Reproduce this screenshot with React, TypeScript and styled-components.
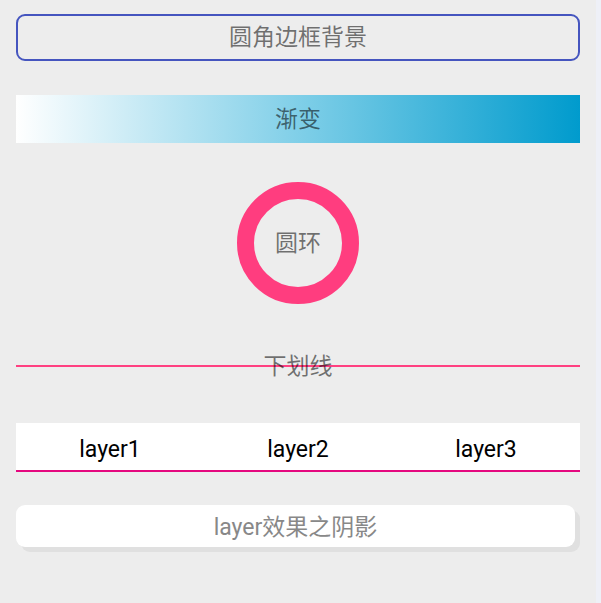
import React from "react";
import styled, { createGlobalStyle } from "styled-components";

const Global = createGlobalStyle`
  html, body { margin: 0; padding: 0; }
  body {
    background: #eef0f6;
    font-family: Roboto, "Noto Sans CJK SC", sans-serif;
  }
`;

const Screen = styled.div`
  display: flex;
  width: 601px;
  height: 603px;
  overflow: hidden;
`;

const Panel = styled.div`
  width: 596px;
  background: #ededed;
  box-sizing: border-box;
  padding: 14px 16px 0 16px;
  display: flex;
  flex-direction: column;
`;

const Strip = styled.div`
  flex: 1;
  background: #eef0f7;
`;

const Label = styled.span<{ $color?: string }>`
  font-size: 23px;
  line-height: 1;
  color: ${(p) => p.$color ?? "rgba(0,0,0,0.54)"};
  white-space: nowrap;
`;

const BorderBox = styled.div`
  height: 47px;
  box-sizing: border-box;
  border: 2px solid #4555bf;
  border-radius: 9px;
  display: flex;
  align-items: center;
  justify-content: center;
`;

const GradientBox = styled.div`
  margin-top: 34px;
  height: 48px;
  background: linear-gradient(to right, #ffffff 0%, #80cfe8 50%, #009bcd 100%);
  display: flex;
  align-items: center;
  justify-content: center;
`;

const Ring = styled.div`
  margin: 39px auto 0;
  width: 122px;
  height: 122px;
  box-sizing: border-box;
  border: 17px solid #ff3d7f;
  border-radius: 50%;
  display: flex;
  align-items: center;
  justify-content: center;
`;

const UnderlineRow = styled.div`
  margin-top: 42px;
  height: 40px;
  background: linear-gradient(
    to bottom,
    transparent 19px,
    #ff4081 19px,
    #ff4081 21px,
    transparent 21px
  );
  display: flex;
  align-items: center;
  justify-content: center;
`;

const Tabs = styled.div`
  margin-top: 37px;
  height: 49px;
  box-sizing: border-box;
  background: #ffffff;
  border-bottom: 2px solid #e5087f;
  display: grid;
  grid-template-columns: repeat(3, 1fr);
  align-items: center;
  padding-top: 5px;
`;

const Tab = styled.div`
  text-align: center;
  font-size: 23px;
  color: #000;
  line-height: 1;
`;

const ShadowCard = styled.div`
  margin-top: 33px;
  width: 559px;
  height: 42px;
  background: #ffffff;
  border-radius: 9px;
  box-shadow: 5px 5px 0 #e0e0e0;
  display: flex;
  align-items: center;
  justify-content: center;
  padding-top: 3px;
  box-sizing: border-box;
`;

export default function App() {
  return (
    <>
      <Global />
      <Screen>
        <Panel>
          <BorderBox>
            <Label>圆角边框背景</Label>
          </BorderBox>
          <GradientBox>
            <Label>渐变</Label>
          </GradientBox>
          <Ring>
            <Label>圆环</Label>
          </Ring>
          <UnderlineRow>
            <Label>下划线</Label>
          </UnderlineRow>
          <Tabs>
            <Tab>layer1</Tab>
            <Tab>layer2</Tab>
            <Tab>layer3</Tab>
          </Tabs>
          <ShadowCard>
            <Label $color="#888888">layer效果之阴影</Label>
          </ShadowCard>
        </Panel>
        <Strip />
      </Screen>
    </>
  );
}
